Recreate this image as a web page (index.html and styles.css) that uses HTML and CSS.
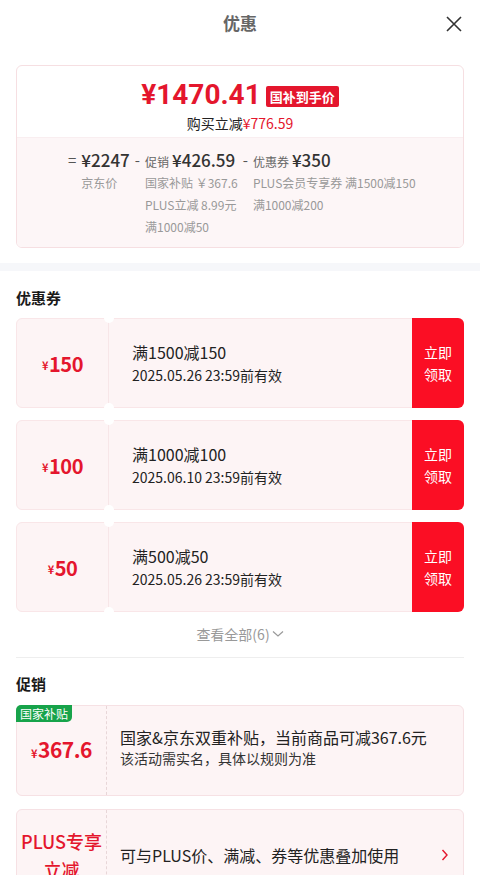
FILE: index.html
```html
<!DOCTYPE html>
<html lang="zh-CN">
<head>
    <meta charset="UTF-8">
    <meta name="viewport" content="width=device-width, initial-scale=1.0">
    <title>优惠</title>
    <link rel="stylesheet" href="styles.css">
</head>
<body>

<div class="header">
    <span class="header-title">优惠</span>
    <svg class="close" width="16" height="16" viewBox="0 0 16 16">
        <path d="M1 1 L15 15 M15 1 L1 15" stroke="#333" stroke-width="1.6" fill="none"/>
    </svg>
</div>

<div class="summary">
    <div class="summary-top">
        <div class="final-price">
            <span class="final-num">¥1470.41</span>
            <span class="final-tag">国补到手价</span>
        </div>
        <div class="save">购买立减<span class="red">¥776.59</span></div>
    </div>
    <div class="summary-detail">
        <span class="op">=</span>
        <div class="calc-col">
            <div class="calc-head"><b>¥2247</b></div>
            <div class="calc-sub">京东价</div>
        </div>
        <span class="op">-</span>
        <div class="calc-col">
            <div class="calc-head"><small>促销</small><b>¥426.59</b></div>
            <div class="calc-sub">国家补贴 ￥367.6</div>
            <div class="calc-sub">PLUS立减 8.99元</div>
            <div class="calc-sub">满1000减50</div>
        </div>
        <span class="op">-</span>
        <div class="calc-col">
            <div class="calc-head"><small>优惠券</small><b>¥350</b></div>
            <div class="calc-sub">PLUS会员专享券 满1500减150</div>
            <div class="calc-sub">满1000减200</div>
        </div>
    </div>
</div>

<div class="band"></div>

<div class="section">
    <h3 class="section-title">优惠券</h3>
    <div class="coupon-list">
        <div class="coupon">
            <div class="coupon-value"><small>¥</small>150</div>
            <div class="coupon-info">
                <div class="coupon-rule">满1500减150</div>
                <div class="coupon-date">2025.05.26 23:59前有效</div>
            </div>
            <div class="coupon-btn">立即<br>领取</div>
        </div>
        <div class="coupon">
            <div class="coupon-value"><small>¥</small>100</div>
            <div class="coupon-info">
                <div class="coupon-rule">满1000减100</div>
                <div class="coupon-date">2025.06.10 23:59前有效</div>
            </div>
            <div class="coupon-btn">立即<br>领取</div>
        </div>
        <div class="coupon">
            <div class="coupon-value"><small>¥</small>50</div>
            <div class="coupon-info">
                <div class="coupon-rule">满500减50</div>
                <div class="coupon-date">2025.05.26 23:59前有效</div>
            </div>
            <div class="coupon-btn">立即<br>领取</div>
        </div>
    </div>
    <div class="more">查看全部(6)
        <svg width="12" height="8" viewBox="0 0 12 8">
            <path d="M1 1.5 L6 6 L11 1.5" stroke="#999" stroke-width="1.2" fill="none"/>
        </svg>
    </div>
</div>

<div class="section promo-section">
    <h3 class="section-title">促销</h3>
    <div class="promo">
        <span class="promo-badge">国家补贴</span>
        <div class="promo-left"><span class="promo-value"><small>¥</small>367.6</span></div>
        <div class="promo-info">
            <div class="promo-main">国家&amp;京东双重补贴，当前商品可减367.6元</div>
            <div class="promo-sub">该活动需实名，具体以规则为准</div>
        </div>
    </div>
    <div class="promo promo-plus">
        <div class="promo-left"><span class="promo-name">PLUS专享<br>立减</span></div>
        <div class="promo-info">
            <div class="promo-main">可与PLUS价、满减、券等优惠叠加使用</div>
        </div>
        <svg class="promo-arrow" width="8" height="12" viewBox="0 0 8 12">
            <path d="M1.5 1 L6 6 L1.5 11" stroke="#e4162d" stroke-width="1.4" fill="none"/>
        </svg>
    </div>
</div>

</body>
</html>
```

FILE: styles.css
```css
body {
    margin: 0;
    font-family: "Noto Sans CJK SC", "Noto Sans", sans-serif;
    color: #1a1a1a;
    background: #fff;
    overflow: hidden;
}

.red {
    color: #e4162d;
}

.header {
    height: 45px;
    display: flex;
    align-items: center;
    justify-content: center;
    position: relative;
}

.header-title {
    font-size: 17px;
    font-weight: bold;
    color: #666;
}

.close {
    position: absolute;
    right: 18px;
    top: 16px;
}

/* 顶部价格汇总 */
.summary {
    margin: 20px 16px 0;
    border: 1px solid #f6dfe2;
    border-radius: 6px;
    overflow: hidden;
}

.summary-top {
    display: flex;
    flex-direction: column;
    align-items: center;
    padding: 11px 0 4px;
    border-bottom: 1px solid #f9eef0;
}

.final-price {
    display: flex;
    align-items: center;
    height: 36px;
}

.final-num {
    font-family: Roboto, "Noto Sans", sans-serif;
    font-size: 28px;
    line-height: 32px;
    font-weight: bold;
    color: #e4162d;
}

.final-tag {
    margin-left: 5px;
    background: #e4162d;
    color: #fff;
    font-size: 13px;
    font-weight: bold;
    padding: 0 4px;
    line-height: 21px;
    border-radius: 2px;
    margin-top: 2px;
}

.save {
    font-size: 14px;
    line-height: 20px;
    color: #222;
}

.summary-detail {
    background: #fdf6f7;
    display: flex;
    padding: 10px 0 9px 51px;
}

.op {
    font-size: 15px;
    line-height: 24px;
    color: #555;
    margin-right: 5px;
}

.calc-col {
    margin-right: 5px;
}

.calc-head {
    line-height: 24px;
    height: 24px;
    display: flex;
    align-items: baseline;
    gap: 3px;
}

.calc-head b {
    font-size: 17px;
    font-weight: 500;
    color: #333;
}

.calc-head small {
    font-size: 12px;
    color: #666;
}

.calc-sub {
    font-size: 12px;
    line-height: 22px;
    color: #999;
}

.band {
    height: 8px;
    background: #f6f7fa;
    margin-top: 15px;
}

/* 优惠券 */
.section {
    padding: 0 16px;
}

.section-title {
    margin: 0;
    padding: 17px 0 10px;
    font-size: 15px;
    line-height: 20px;
    font-weight: bold;
}

.coupon-list {
    display: flex;
    flex-direction: column;
    gap: 12px;
}

.coupon {
    height: 90px;
    display: flex;
    background: #fdf4f5;
    border-radius: 6px;
    border: 1px solid #f9e6e8;
    box-sizing: border-box;
    position: relative;
}

.coupon-value {
    width: 91px;
    display: flex;
    align-items: center;
    justify-content: center;
    font-size: 20px;
    font-weight: bold;
    letter-spacing: -0.5px;
    color: #e4162d;
    border-right: 1px solid #f7e6e8;
    position: relative;
}

.coupon-value small {
    font-size: 11px;
    margin-top: 4px;
    margin-right: 1px;
}

.coupon-value::before,
.coupon-value::after {
    content: "";
    position: absolute;
    right: -6px;
    width: 10px;
    height: 10px;
    border-radius: 50%;
    background: #fff;
}

.coupon-value::before {
    top: -6px;
}

.coupon-value::after {
    bottom: -6px;
}

.coupon-info {
    flex: 1;
    padding-left: 23px;
    display: flex;
    flex-direction: column;
    justify-content: center;
}

.coupon-rule {
    font-size: 16px;
    line-height: 24px;
    color: #222;
}

.coupon-date {
    font-size: 14px;
    line-height: 22px;
    color: #222;
}

.coupon-btn {
    width: 52px;
    margin: -1px -1px -1px 0;
    background: #fb0e24;
    color: #fff;
    font-size: 14px;
    line-height: 22px;
    display: flex;
    align-items: center;
    justify-content: center;
    text-align: center;
    border-radius: 0 6px 6px 0;
}

.more {
    display: flex;
    align-items: center;
    justify-content: center;
    gap: 2px;
    font-size: 14px;
    color: #999;
    line-height: 20px;
    padding: 12px 0 13px;
    border-bottom: 1px solid #eeeeee;
}

/* 促销 */
.promo-section .section-title {
    padding: 16px 0 11px;
}

.promo {
    display: flex;
    height: 91px;
    background: #fdf4f5;
    border: 1px solid #f6e1e4;
    border-radius: 6px;
    box-sizing: border-box;
    position: relative;
    margin-bottom: 13px;
}

.promo-plus {
    height: 92px;
}

.promo-badge {
    position: absolute;
    left: -1px;
    top: -1px;
    background: #17a34a;
    color: #fff;
    font-size: 12px;
    line-height: 17px;
    padding: 0 4px;
    border-radius: 5px 0 5px 0;
}

.promo-left {
    width: 89px;
    border-right: 1px dashed #e8d6d8;
    display: flex;
    align-items: center;
    justify-content: center;
    text-align: center;
}

.promo-value {
    font-size: 21px;
    font-weight: bold;
    letter-spacing: -0.5px;
    color: #e4162d;
    margin-top: -4px;
}

.promo-value small {
    font-size: 11px;
    margin-right: 1px;
}

.promo-name {
    font-size: 18px;
    line-height: 28px;
    color: #e4162d;
    font-weight: 500;
}

.promo-info {
    flex: 1;
    padding-left: 13px;
    display: flex;
    flex-direction: column;
    justify-content: center;
}

.promo-main {
    font-size: 16px;
    line-height: 22px;
    color: #222;
}

.promo-sub {
    font-size: 14px;
    line-height: 20px;
    color: #333;
    margin-bottom: 8px;
}

.promo-arrow {
    align-self: center;
    margin-right: 14px;
}
```
